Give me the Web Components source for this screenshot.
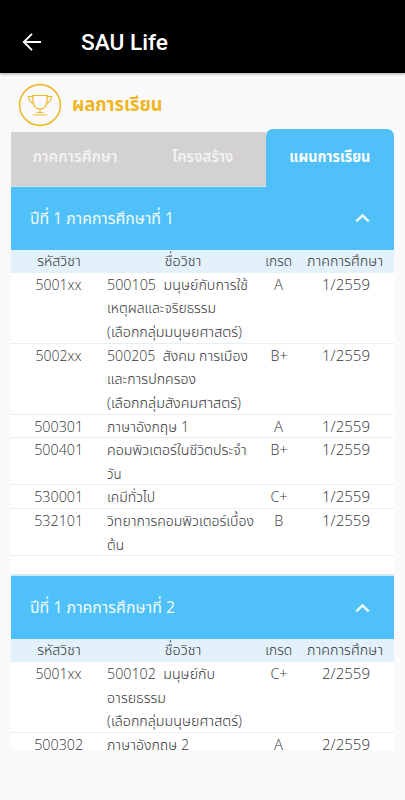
<!DOCTYPE html>
<html lang="th">
<head>
<meta charset="utf-8">
<meta name="viewport" content="width=device-width, initial-scale=1">
<title>SAU Life</title>
<style>
    body{
        margin: 0;
        height: 800px;
        overflow: hidden;
        background: #fafafa;
        font-family: "Open Sans", "Noto Sans", "Noto Sans Thai", sans-serif;
        color: #343437;
    }
</style>
</head>
<body>
<app-bar>SAU Life</app-bar>
<page-title><fit-text width="90.5">ผลการเรียน</fit-text></page-title>
<tab-bar>
    <tab-item style="width:128px"><fit-text align="center" width="85">ภาคการศึกษา</fit-text></tab-item>
    <tab-item style="width:127px"><fit-text align="center" width="61">โครงสร้าง</fit-text></tab-item>
    <tab-item active style="width:128px"><fit-text align="center" width="81">แผนการเรียน</fit-text></tab-item>
</tab-bar>
<study-plan></study-plan>

<script>
// one line of text, squeezed or stretched to the given width
class FitText extends HTMLElement{
    constructor(){
        super();
        this.attachShadow({mode: 'open'});
        this.shadowRoot.innerHTML = `
            <style>
                :host{ display: flex; white-space: pre; }
                :host([align=center]){ justify-content: center; }
                span{ display: block; flex: none; transform-origin: left center; }
                :host([align=center]) span{ transform-origin: center; }
            </style>
            <span><slot></slot></span>
        `;
    }

    connectedCallback(){
        requestAnimationFrame(this._fit.bind(this));
    }

    _fit(){
        const span = this.shadowRoot.querySelector('span');
        const width = parseFloat(this.getAttribute('width'));
        if(width && span.offsetWidth){
            span.style.transform = `scaleX(${width / span.getBoundingClientRect().width})`;
        }
    }
}

class AppBar extends HTMLElement{
    constructor(){
        super();
        this.attachShadow({mode: 'open'});
        this.shadowRoot.innerHTML = `
            <style>
                :host{
                    display: flex;
                    align-items: center;
                    gap: 38px;
                    box-sizing: border-box;
                    height: 73px;
                    padding: 12px 0 0 21px;
                    background: #000;
                    color: #fff;
                    font: 500 22px/28px Roboto, sans-serif;
                    box-shadow: 0 1px 3px rgba(0,0,0,.35);
                }
                svg{ display: block; flex: none; }
            </style>
            <svg width="22" height="20" viewBox="0 0 22 20" fill="none" stroke="#fff" stroke-width="1.9"><path d="M11 .8 2.8 9l8.2 8.2M3 9h17"/></svg>
            <fit-text width="87"><slot></slot></fit-text>
        `;
    }
}

class PageTitle extends HTMLElement{
    constructor(){
        super();
        this.attachShadow({mode: 'open'});
        this.shadowRoot.innerHTML = `
            <style>
                :host{
                    display: flex;
                    align-items: center;
                    gap: 10px;
                    box-sizing: border-box;
                    height: 56px;
                    padding: 8px 0 0 18px;
                    color: #f1b51f;
                    font-size: 20px;
                    font-weight: 700;
                    line-height: 30px;
                }
                svg{ display: block; flex: none; }
                ::slotted(*){ margin-top: -2px; }
            </style>
            <svg width="44" height="44" viewBox="0 0 44 44" fill="none" stroke="#edb92f" stroke-width="1.2">
                <circle cx="22" cy="22" r="20.4" stroke-width="1.6"/>
                <path d="M15 12.5h14v6.5q0 6-7 7.3-7-1.3-7-7.3zM15 13.5h-4.5q0 5.5 6 7.2M29 13.5h4.5q0 5.5-6 7.2M22 26.3v3.2M18.5 29.5h7M14.5 32h15"/>
            </svg>
            <slot></slot>
        `;
    }
}

class TabBar extends HTMLElement{
    constructor(){
        super();
        this.attachShadow({mode: 'open'});
        this.shadowRoot.innerHTML = `
            <style>
                :host{
                    display: flex;
                    align-items: flex-end;
                    height: 58px;
                    margin: 0 11px;
                }
            </style>
            <slot></slot>
        `;
    }
}

class TabItem extends HTMLElement{
    constructor(){
        super();
        this.attachShadow({mode: 'open'});
        this.shadowRoot.innerHTML = `
            <style>
                :host{
                    display: block;
                    box-sizing: border-box;
                    height: 55px;
                    padding-top: 9px;
                    border-bottom: 1px solid #cbdfe9;
                    background: #d3d1d2;
                    color: #f3f2f3;
                    font-size: 16.5px;
                    font-weight: 600;
                    line-height: 30px;
                }
                :host([active]){
                    height: 58px;
                    padding-top: 12px;
                    border: 0;
                    border-radius: 7px 7px 0 0;
                    background: #4fc1f8;
                    color: #fff;
                    font-weight: 700;
                }
            </style>
            <slot></slot>
        `;
    }
}

class TermPanel extends HTMLElement{
    constructor(){
        super();
        this.attachShadow({mode: 'open'});
        this.shadowRoot.innerHTML = `
            <style>
                :host{ display: block; padding-bottom: 18px; background: #fff; }
                header{
                    display: flex;
                    align-items: center;
                    justify-content: space-between;
                    height: 62.5px;
                    padding: 0 24px 0 19px;
                    background: #4fc1f8;
                    color: #f2fbff;
                    font-size: 16.5px;
                }
                svg{ display: block; }
            </style>
            <header>
                <slot name="title"></slot>
                <svg width="15" height="10" viewBox="0 0 15 10" fill="none" stroke="#effbff" stroke-width="2.4"><path d="m1.3 8.3 6.2-6 6.2 6"/></svg>
            </header>
            <slot></slot>
        `;
    }
}

class CourseRow extends HTMLElement{
    constructor(){
        super();
        this.attachShadow({mode: 'open'});
        this.shadowRoot.innerHTML = `
            <style>
                :host{
                    display: grid;
                    grid-template-columns: 95px 152px 42px 91px;
                    box-shadow: inset 0 -1px #e4f0f7;
                    font-size: 15px;
                    font-weight: 350;
                    line-height: 23.62px;
                }
                :host([head]){ height: 23.3px; background: #e3f1fb; box-shadow: none; line-height: 21.6px; }
                .name{ padding-left: 1px; }
                :host([head]) .name{ padding-left: 2px; }
            </style>
            <slot name="code"></slot>
            <div class="name"><slot name="name"></slot></div>
            <slot name="grade"></slot>
            <slot name="term"></slot>
        `;
    }
}

const TERMS = [
    {
        title: ['ปีที่ 1 ภาคการศึกษาที่ 1', 144],
        term: '1/2559',
        courses: [
            ['5001xx', 'A', [['500105  มนุษย์กับการใช้', 141], ['เหตุผลและจริยธรรม', 109], ['(เลือกกลุ่มมนุษยศาสตร์)', 135]]],
            ['5002xx', 'B+', [['500205  สังคม การเมือง', 141], ['และการปกครอง', 89], ['(เลือกกลุ่มสังคมศาสตร์)', 134]]],
            ['500301', 'A', [['ภาษาอังกฤษ 1', 82]]],
            ['500401', 'B+', [['คอมพิวเตอร์ในชีวิตประจำ', 139.5], ['วัน', 14.5]]],
            ['530001', 'C+', [['เคมีทั่วไป', 48]]],
            ['532101', 'B', [['วิทยาการคอมพิวเตอร์เบื้อง', 147], ['ต้น', 17]]]
        ]
    },
    {
        title: ['ปีที่ 1 ภาคการศึกษาที่ 2', 145],
        term: '2/2559',
        courses: [
            ['5001xx', 'C+', [['500102  มนุษย์กับ', 108], ['อารยธรรม', 59], ['(เลือกกลุ่มมนุษยศาสตร์)', 135]]],
            ['500302', 'A', [['ภาษาอังกฤษ 2', 82]]]
        ]
    }
];

class StudyPlan extends HTMLElement{
    constructor(){
        super();
        this.attachShadow({mode: 'open'});
        this.shadowRoot.innerHTML = `
            <style>
                :host{
                    display: block;
                    height: 563px;
                    margin: 0 11px;
                    overflow: hidden;
                    background: #fff;
                }
                term-panel + term-panel{ border-top: 2px solid #cfe7f3; }
            </style>
            ${TERMS.map(t => this._panel(t)).join('')}
        `;
    }

    _panel(t){
        return `<term-panel>
            <fit-text slot="title" width="${t.title[1]}">${t.title[0]}</fit-text>
            <course-row head>
                ${this._cell('code', 'รหัสวิชา', 43.5)}
                ${this._cell('name', 'ชื่อวิชา', 36.5)}
                ${this._cell('grade', 'เกรด', 27)}
                ${this._cell('term', 'ภาคการศึกษา', 76)}
            </course-row>
            ${t.courses.map(c => this._course(c, t.term)).join('')}
        </term-panel>`;
    }

    _cell(slot, text, width){
        return `<fit-text slot="${slot}" align="center" width="${width}">${text}</fit-text>`;
    }

    _course(c, term){
        const lines = c[2].map(l => `<fit-text slot="name" width="${l[1]}">${l[0]}</fit-text>`).join('');
        return `<course-row>
            ${this._cell('code', c[0], c[0].endsWith('xx') ? 46 : 49)}
            ${lines}
            ${this._cell('grade', c[1], c[1].length > 1 ? 17 : 9)}
            ${this._cell('term', term, 48)}
        </course-row>`;
    }
}

customElements.define('fit-text', FitText);
customElements.define('app-bar', AppBar);
customElements.define('page-title', PageTitle);
customElements.define('tab-bar', TabBar);
customElements.define('tab-item', TabItem);
customElements.define('term-panel', TermPanel);
customElements.define('course-row', CourseRow);
customElements.define('study-plan', StudyPlan);
</script>
</body>
</html>
